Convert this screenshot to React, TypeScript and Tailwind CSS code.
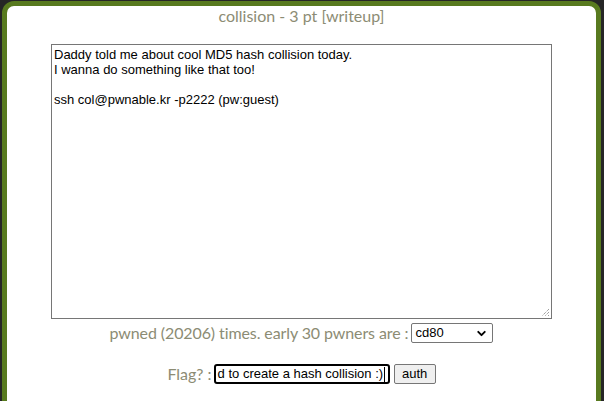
import { ChevronDown } from "lucide-react"

export default function App() {
  return (
    <div className="w-[604px] h-[401px] overflow-hidden bg-[#262626]">
      <div className="ml-[2px] mt-[1px] w-[599px] h-[420px] border-[5px] border-[#587a1f] rounded-[12px] bg-white font-['Lato',sans-serif]">
        <div className="pt-0 text-center text-[16px] leading-[20px] text-[#8c8c74]">
          collision - 3 pt [writeup]
        </div>

        <div className="mt-[18px] flex justify-center">
          <div className="relative w-[501px] h-[275px] border border-[#767676] bg-white px-[2px] pt-[2px] font-['Liberation_Sans',Arial,sans-serif] text-[13px] leading-[15px] text-black whitespace-pre">
            {"Daddy told me about cool MD5 hash collision today.\nI wanna do something like that too!\n\nssh col@pwnable.kr -p2222 (pw:guest)"}
            <svg className="absolute right-[1px] bottom-[1px]" width="10" height="10" viewBox="0 0 10 10">
              <path d="M9 2 L2 9 M9 5 L5 9 M9 8 L8 9" stroke="#777" strokeWidth="1" strokeDasharray="1 1" />
            </svg>
          </div>
        </div>

        <div className="mt-[4px] flex items-center justify-center gap-[3px] text-[16px] leading-[20px] text-[#8c8c74]">
          <span className="tracking-[-0.1px]">pwned (20206) times. early 30 pwners are :</span>
          <div className="flex items-center justify-between w-[82px] h-[20px] border border-[#767676] rounded-[2px] bg-white pl-[3px] pr-[4px] font-['Liberation_Sans',Arial,sans-serif] text-[13px] text-black">
            <span>cd80</span>
            <ChevronDown size={13} strokeWidth={3.5} />
          </div>
        </div>

        <div className="mt-[21px] flex items-center justify-center text-[16px] leading-[20px] text-[#8c8c74]">
          <span className="mr-[2px]">Flag? :</span>
          <div className="flex items-center w-[176px] h-[20px] border-2 border-black rounded-[3px] bg-white pl-[2px] overflow-hidden font-['Liberation_Sans',Arial,sans-serif] text-[13px] text-black whitespace-nowrap">
            d to create a hash collision :)
            <span className="inline-block w-px h-[15px] bg-black ml-[1px]" />
          </div>
          <button className="ml-[4px] w-[42px] h-[20px] border border-[#767676] rounded-[2px] bg-[#efefef] font-['Liberation_Sans',Arial,sans-serif] text-[13px] leading-[18px] text-black">
            auth
          </button>
        </div>
      </div>
    </div>
  )
}
